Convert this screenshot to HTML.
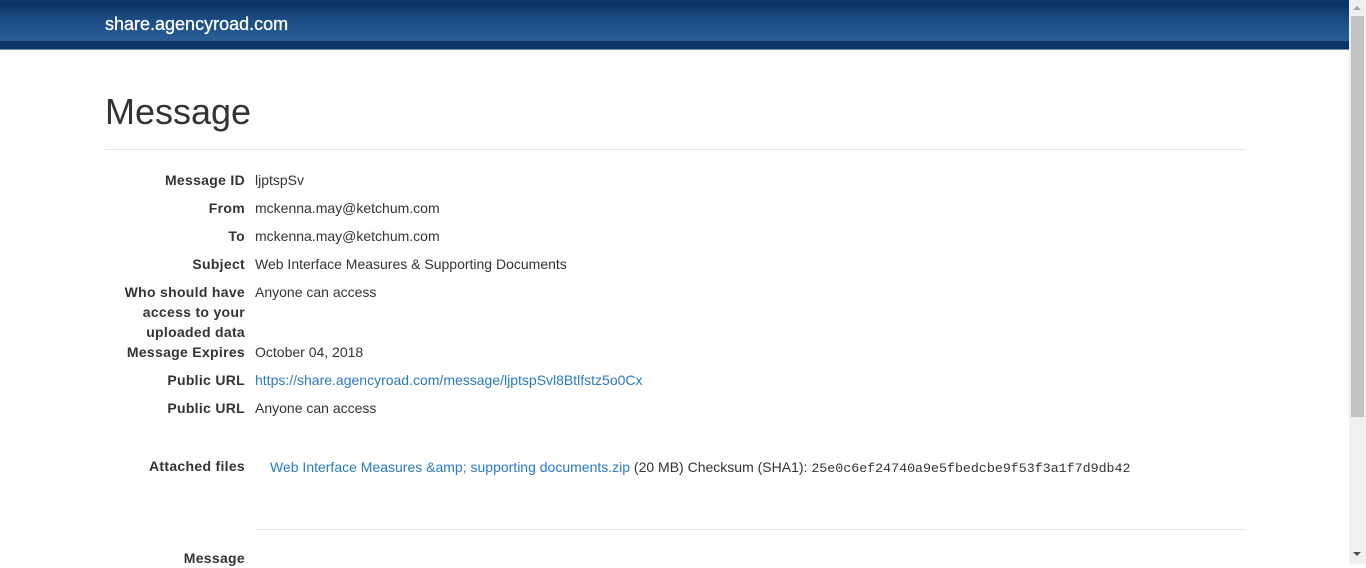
<!DOCTYPE html>
<html><head><style>
body{margin:0;width:1366px;height:564px;overflow:hidden;font-family:"Liberation Sans",Arial,sans-serif;font-size:14px;color:#333;background:#fff;position:relative}
.hdr{position:absolute;left:0;top:0;width:1349px;height:50px;background:linear-gradient(#0c396a 0,#0a3464 4px,#1a4a80 18px,#2a5f95 41px,#0a3566 41px,#0a3566 49px,#e5e5e5 50px)}
.hdr span{position:absolute;left:105px;top:14px;color:#fff;font-size:18px;-webkit-text-stroke:0.3px #fff}
h1{position:absolute;left:105px;top:91px;margin:0;font-weight:400;font-size:36px;color:#333}
.hr{position:absolute;left:105px;top:149px;width:1140px;height:1px;background:#e5e5e5}
.l{position:absolute;right:1121px;font-weight:bold;text-align:right;line-height:20px;letter-spacing:0.3px}
.v{position:absolute;left:255px;line-height:20px}
a{color:#2a7ac0;text-decoration:none}
.sb{position:absolute;left:1349px;top:0;width:17px;height:564px;background:#f0f0f0}
.th{position:absolute;left:1351px;top:16px;width:13px;height:401px;background:#c1c1c1}
</style></head><body>
<div class="hdr"><span>share.agencyroad.com</span></div>
<h1>Message</h1><div class="hr"></div>
<div class="l" style="top:170px">Message ID</div><div class="v" style="top:170px">ljptspSv</div>
<div class="l" style="top:198px">From</div><div class="v" style="top:198px">mckenna.may@ketchum.com</div>
<div class="l" style="top:226px">To</div><div class="v" style="top:226px">mckenna.may@ketchum.com</div>
<div class="l" style="top:254px">Subject</div><div class="v" style="top:254px">Web Interface Measures &amp; Supporting Documents</div>
<div class="l" style="top:282px">Who should have<br>access to your<br>uploaded data</div><div class="v" style="top:282px">Anyone can access</div>
<div class="l" style="top:342px">Message Expires</div><div class="v" style="top:342px">October 04, 2018</div>
<div class="l" style="top:370px">Public URL</div><div class="v" style="top:370px"><a>https://share.agencyroad.com/message/ljptspSvl8Btlfstz5o0Cx</a></div>
<div class="l" style="top:398px">Public URL</div><div class="v" style="top:398px">Anyone can access</div>
<div class="l" style="top:456px">Attached files</div><div class="v" style="top:457px;left:270px"><a>Web Interface Measures &amp;amp; supporting documents.zip</a> (20 MB) Checksum (SHA1): <span style="font-family:'Liberation Mono',monospace;font-size:13.3px">25e0c6ef24740a9e5fbedcbe9f53f3a1f7d9db42</span></div>
<div class="hr" style="left:255px;width:990px;top:529px"></div>
<div class="l" style="top:548px">Message</div>
<div class="sb"></div><div class="th"></div>
<div style="position:absolute;left:1353px;top:6px;border:4px solid transparent;border-bottom:4px solid #a3a3a3;border-top:0;width:0"></div>
<div style="position:absolute;left:1353px;top:552px;border:4px solid transparent;border-top:4px solid #505050;border-bottom:0;width:0"></div>
</body></html>
